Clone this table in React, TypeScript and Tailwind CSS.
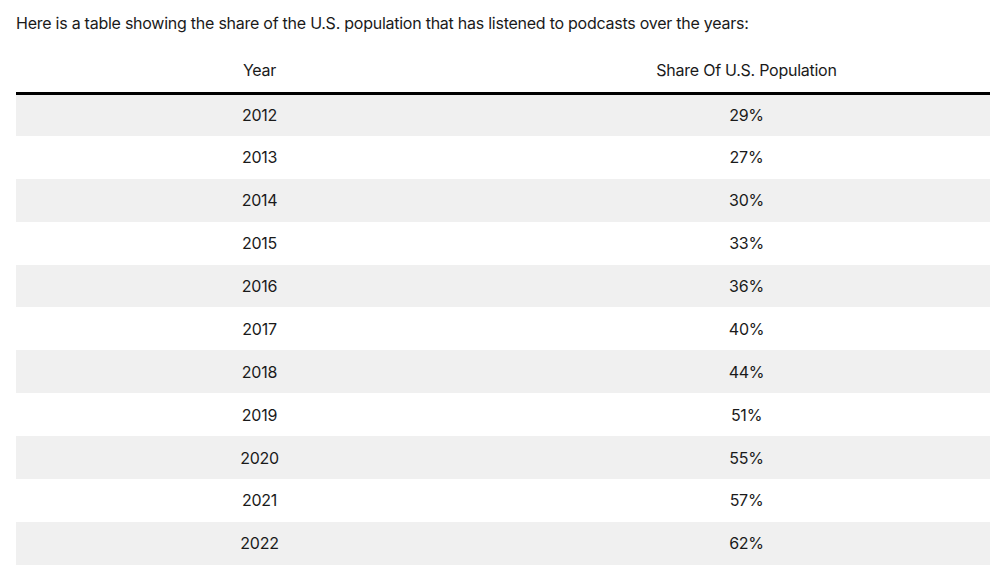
const rows = [
  { year: "2012", share: "29%" },
  { year: "2013", share: "27%" },
  { year: "2014", share: "30%" },
  { year: "2015", share: "33%" },
  { year: "2016", share: "36%" },
  { year: "2017", share: "40%" },
  { year: "2018", share: "44%" },
  { year: "2019", share: "51%" },
  { year: "2020", share: "55%" },
  { year: "2021", share: "57%" },
  { year: "2022", share: "62%" },
];

export default function App() {
  return (
    <div className="min-h-screen bg-white pl-4 pr-[10px] pt-[12px] text-[#1a1a1a] font-['Inter','Liberation_Sans',sans-serif] text-[16px] tracking-[-0.25px]">
      <p className="leading-[22px]">
        Here is a table showing the share of the U.S. population that has listened to podcasts over the years:
      </p>
      <table className="mt-[14px] w-full table-fixed border-collapse">
        <thead>
          <tr className="border-b-[3px] border-black">
            <th className="h-[45px] font-normal text-center">Year</th>
            <th className="h-[45px] font-normal text-center">Share Of U.S. Population</th>
          </tr>
        </thead>
        <tbody>
          {rows.map((row, i) => (
            <tr key={row.year} className={i % 2 === 0 ? "bg-[#f0f0f0]" : "bg-white"}>
              <td className="h-[42.9px] text-center">{row.year}</td>
              <td className="h-[42.9px] text-center">{row.share}</td>
            </tr>
          ))}
        </tbody>
      </table>
    </div>
  );
}
